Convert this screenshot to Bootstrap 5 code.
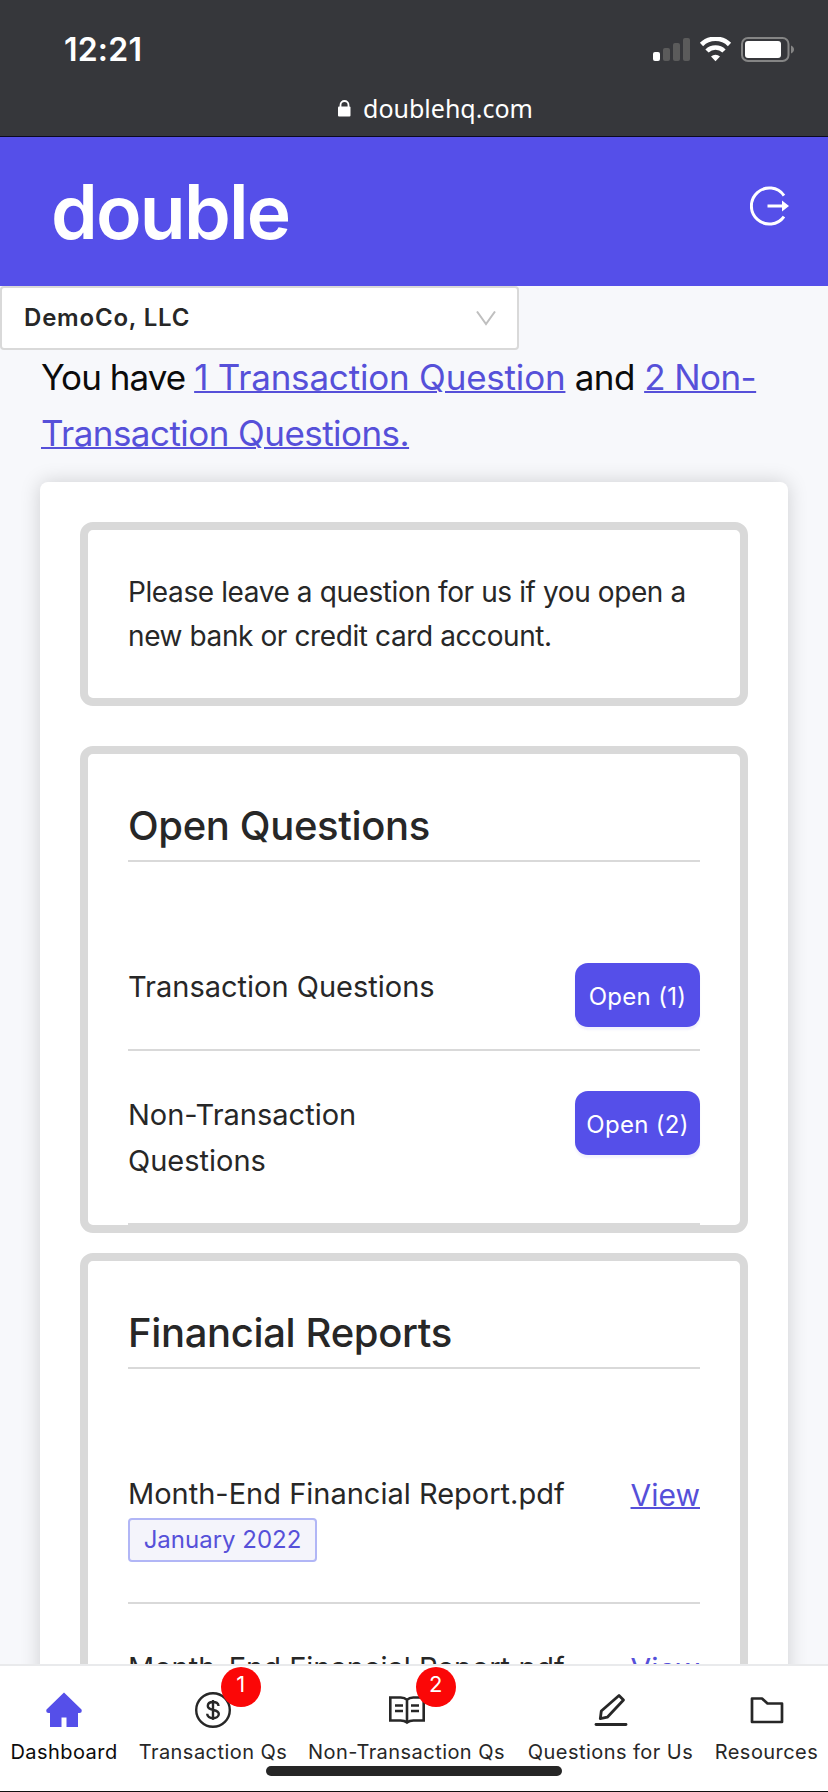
<!DOCTYPE html>
<html lang="en">
<head>
<meta charset="utf-8">
<meta name="viewport" content="width=device-width, initial-scale=1">
<title>Double – Dashboard</title>
<link href="https://cdn.jsdelivr.net/npm/bootstrap@5.3.0/dist/css/bootstrap.min.css" rel="stylesheet">
<style>
  :root { --brand: #554fe9; --link: #5650d9; --line: #d9d9d9; --ink: #272727; }
  html, body { height: 100%; overflow: hidden; }
  body { background: #f7f8fb; color: var(--ink); font-family: Inter, "Liberation Sans", sans-serif; }
  svg { display: block; }
  .phone { height: 1792px; border-bottom: 1px solid #111; }
  .chrome { height: 137px; background: #36373b; border-bottom: 1px solid #0b0a20; color: #fff; }
  .clock { font-size: 32px; font-weight: 600; line-height: 40px; letter-spacing: .2px; padding: 30px 0 0 64px; }
  .status-icons { padding: 37px 33px 0 0; }
  .address { font-family: "Noto Sans", sans-serif; font-size: 25px; line-height: 36px; padding: 20px 0 0 338px; }
  .brandbar { height: 149px; background: var(--brand); color: #fff; padding: 0 38px 0 51px; }
  .wordmark { font-size: 75px; font-weight: 600; line-height: 90px; letter-spacing: -1.8px; padding-top: 30px; }
  .signout { margin-top: 49px; }
  .company { width: 519px; height: 64px; background: #fff; border: 2px solid var(--line); border-radius: 4px; padding: 0 21px 0 22px; }
  .company-name { font-size: 24px; font-weight: 600; line-height: 30px; letter-spacing: .8px; }
  .summary { font-size: 35px; line-height: 56px; height: 112px; margin-top: -1px; color: #0b0b0b; padding: 0 40px 0 41px; letter-spacing: -.55px; }
  .summary .intro { letter-spacing: -.95px; }
  .summary .first-link { letter-spacing: -.2px; }
  .summary a, .view { color: var(--link); text-decoration-thickness: 2px; }
  .sheet { margin: 21px 40px 0 40px; padding: 40px; background: #fff; border-radius: 8px; box-shadow: 0 0 20px rgba(0,0,0,.17); }
  .panel { border: 8px solid var(--line); border-radius: 13px; padding: 0 40px; }
  .notice { height: 184px; padding-top: 40px; margin-bottom: 40px; font-size: 28px; line-height: 44px; letter-spacing: -.4px; white-space: nowrap; }
  .open-panel { height: 487px; margin-bottom: 20px; }
  .panel h2 { font-size: 40px; font-weight: 500; line-height: 60px; margin: 0 0 61px; height: 108px; padding-top: 42px; border-bottom: 2px solid var(--line); letter-spacing: -.35px; }
  .entry { font-size: 29px; line-height: 46px; padding: 41px 0 0; border-bottom: 2px solid var(--line); height: 174px; }
  .entry-short { height: 128px; }
  .view { font-size: 30px; line-height: 48px; }
  .btn-open { --bs-btn-color: #fff; --bs-btn-bg: var(--brand); --bs-btn-hover-bg: #4741d8; --bs-btn-hover-color: #fff; width: 125px; height: 64px; border: 0; border-radius: 13px; padding: 3px 0 0; margin-top: -1px; font-size: 24px; letter-spacing: .3px; box-shadow: 0 3px 2px rgba(85,79,233,.08); flex: none; }
  .period { font-size: 24px; line-height: 40px; height: 44px; width: 189px; margin-top: 1px; background: #f4f4fb; color: var(--link); border: 2px solid #b1b6f6; border-radius: 4px; }
  .tabs { height: 127px; background: #fff; border-top: 2px solid #e9eaec; }
  .tab { font-size: 20px; line-height: 24px; letter-spacing: .45px; color: var(--ink); text-decoration: none; padding-top: 26px; white-space: nowrap; }
  .tab.active { color: #0b0b0b; }
  .tab svg { margin: 0 auto 12px; }
  .count { position: absolute; top: 1px; width: 40px; height: 40px; border-radius: 50%; background: #fb0707; color: #fff; font-size: 22px; line-height: 35px; text-align: center; }
  .home-indicator { position: absolute; left: 266px; bottom: 15px; width: 296px; height: 10px; border-radius: 5px; background: #262626; }
</style>
</head>
<body>
<div class="phone d-flex flex-column overflow-hidden">
  <header class="chrome flex-shrink-0">
    <div class="d-flex justify-content-between">
      <div class="clock">12:21</div>
      <div class="status-icons">
        <svg width="142" height="26" viewBox="653 37 142 26">
          <g fill="#5b5b5b"><rect x="663" y="48" width="7" height="13" rx="2"/><rect x="673" y="43" width="7" height="18" rx="2"/><rect x="683" y="38" width="7" height="23" rx="2"/></g>
          <rect x="653" y="52" width="7" height="9" rx="2" fill="#fff"/>
          <path d="M701.5 44.5a20 20 0 0 1 28 0M707 51a12 12 0 0 1 17 0" fill="none" stroke="#fff" stroke-width="4.6"/>
          <path d="M711 56.500a6.400 6.400 0 0 1 9 0L715.500 61.300z" fill="#fff"/>
          <rect x="742" y="38" width="46.500" height="23" rx="6" fill="none" stroke="#858585" stroke-width="2"/>
          <rect x="745" y="41" width="36" height="17" rx="3" fill="#fff"/>
          <path d="M791 45.500c4 1.500 4 6.500 0 8z" fill="#858585"/>
        </svg>
      </div>
    </div>
    <div class="address d-flex align-items-center">
      <svg width="13" height="17" viewBox="0 0 13 17" class="me-2"><path d="M2.500 7V5a4 4 0 0 1 8 0v2" fill="none" stroke="#fff" stroke-width="1.800"/><rect y="6.500" width="12.500" height="10" rx="1" fill="#fff"/></svg>
      <span class="ms-1">doublehq.com</span>
    </div>
  </header>

  <nav class="brandbar d-flex justify-content-between flex-shrink-0">
    <div class="wordmark">double</div>
    <a href="#" class="signout" aria-label="Sign out">
      <svg width="40" height="40" viewBox="749 186 40 40"><path d="M783 195.500a18 18 0 1 0 0 21" fill="none" stroke="#fff" stroke-width="3"/><path d="M766.500 204.400H781V200.500L788 206 781 211.500V207.600H766.500z" fill="#fff"/></svg>
    </a>
  </nav>

  <main class="flex-grow-1 overflow-hidden">
    <div class="company d-flex align-items-center justify-content-between">
      <span class="company-name">DemoCo, LLC</span>
      <svg width="20" height="15" viewBox="0 0 20 15"><path d="M1 .5l9 12.500L19 .5" fill="none" stroke="#bfbfbf" stroke-width="2"/></svg>
    </div>
    <p class="summary mb-0"><span class="intro">You have </span><a href="#" class="first-link">1 Transaction Question</a> and <a href="#">2 Non-<br>Transaction Questions.</a></p>

    <div class="sheet">
      <section class="panel notice">Please leave a question for us if you open a<br>new bank or credit card account.</section>

      <section class="panel open-panel">
        <h2>Open Questions</h2>
        <div class="entry entry-short d-flex justify-content-between align-items-start"><span>Transaction Questions</span><button class="btn btn-open">Open (1)</button></div>
        <div class="entry d-flex justify-content-between align-items-start"><span>Non-Transaction<br>Questions</span><button class="btn btn-open">Open (2)</button></div>
      </section>

      <section class="panel">
        <h2>Financial Reports</h2>
        <div class="entry d-flex justify-content-between align-items-start"><div><div>Month-End Financial Report.pdf</div><div class="period text-center">January 2022</div></div><a href="#" class="view">View</a></div>
        <div class="entry d-flex justify-content-between align-items-start"><div>Month-End Financial Report.pdf</div><a href="#" class="view">View</a></div>
      </section>
    </div>
  </main>

  <nav class="tabs d-flex flex-shrink-0 position-relative">
    <a href="#" class="tab active text-center" style="width:128px">
      <svg width="36" height="36" viewBox="0 0 36 36" fill="#554fe9"><path d="M18 .5L35.500 17.500q1 3.500-2 3.500H32v14H20.500V25.500h-5V35H4V21H2.500q-3 0-2-3.500z"/></svg>Dashboard
    </a>
    <a href="#" class="tab text-center position-relative" style="width:170px">
      <svg width="36" height="36" viewBox="0 0 36 36" fill="none" stroke="#272727"><circle cx="18" cy="18" r="16.800" stroke-width="2.400"/><path d="M18 8v20M23.500 14c0-3-2.500-4-5.500-4s-5.200 1.500-5.200 4c0 5.500 11 2.500 11 8 0 2.700-2.600 4.200-5.800 4.200s-5.800-1.500-5.800-4.500" stroke-width="2.400"/></svg>Transaction Qs
      <span class="count" style="left:93px">1</span>
    </a>
    <a href="#" class="tab text-center position-relative" style="width:217px">
      <svg width="36" height="36" viewBox="0 0 36 36" fill="none" stroke="#272727" stroke-width="2.600"><path d="M1.300 5.500h10.400q4 0 6.300 2.300 2.300-2.300 6.300-2.300h10.400v23H24.500q-4 0-6.500 2-2.500-2-6.500-2H1.300zM18 7.500V30M6 13.500h8M6 19h8M22 13.500h8M22 19h8"/></svg>Non-Transaction Qs
      <span class="count" style="left:118px">2</span>
    </a>
    <a href="#" class="tab text-center" style="width:191px">
      <svg width="36" height="36" viewBox="0 0 36 36" fill="none" stroke="#272727" stroke-width="2.800"><path d="M3 32.500h30" stroke-linecap="round"/><path d="M7.300 26.700l1-7.700L26 3.500l4.500 4.500L14.300 25.200z" stroke-linejoin="round"/></svg>Questions for Us
    </a>
    <a href="#" class="tab text-center" style="width:121px">
      <svg width="36" height="36" viewBox="0 0 36 36" fill="none" stroke="#272727" stroke-width="2.700" stroke-linejoin="round"><path d="M3 6.500h10l5.500 5H33v18.500H3z"/></svg>Resources
    </a>
    <div class="home-indicator"></div>
  </nav>
</div>
<script src="https://cdn.jsdelivr.net/npm/bootstrap@5.3.0/dist/js/bootstrap.bundle.min.js"></script>
</body>
</html>
